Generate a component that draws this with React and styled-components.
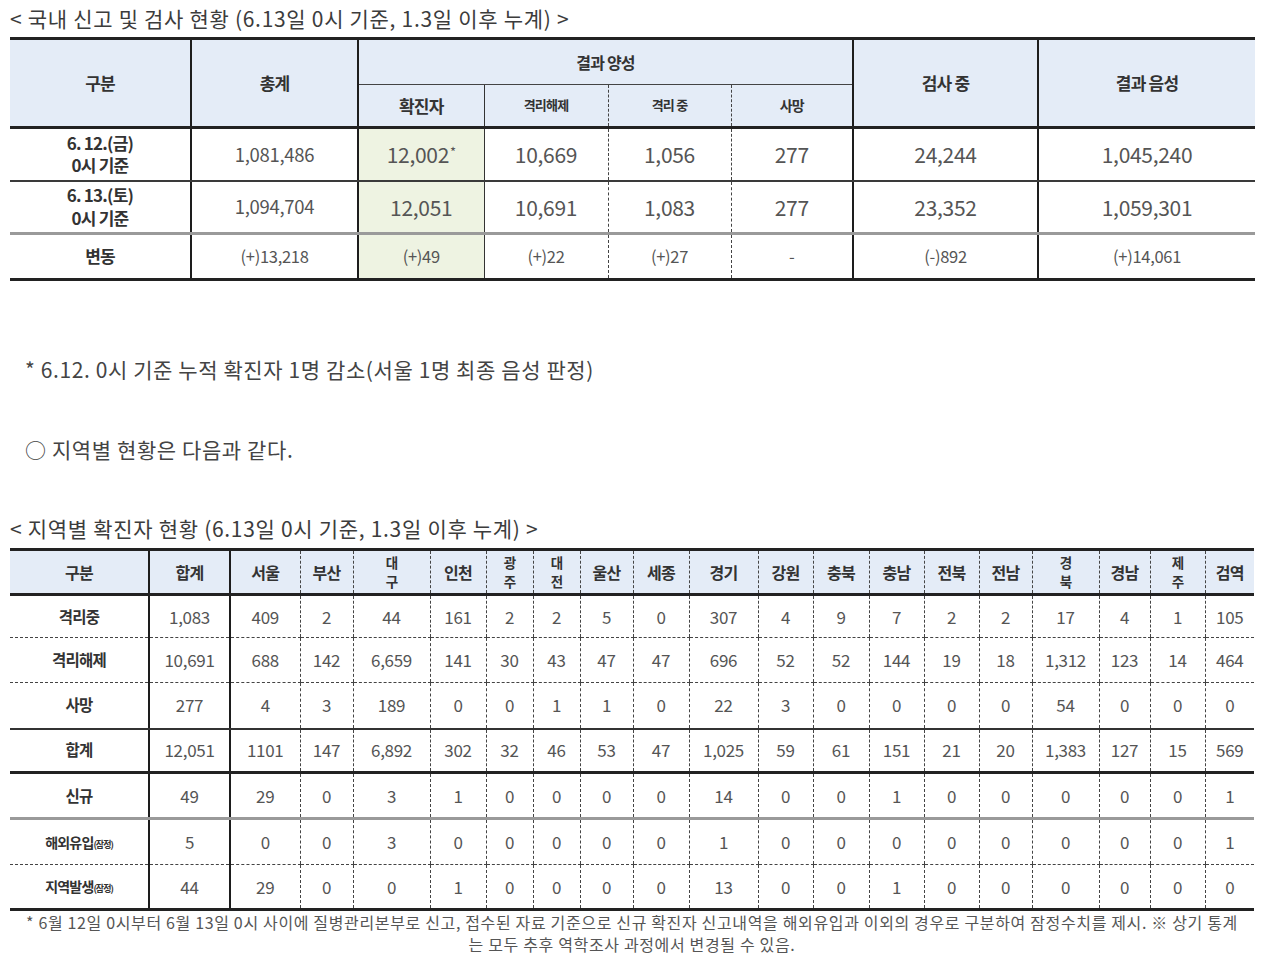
import React from 'react';
import styled, { createGlobalStyle } from 'styled-components';

const GlobalStyle = createGlobalStyle`
  html, body {
    margin: 0;
    padding: 0;
    background: #fff;
  }
  body {
    font-family: "Noto Sans CJK KR", "Noto Sans", sans-serif;
    color: #333;
  }
`;

const Page = styled.div`
  width: 1280px;
  padding-left: 10px;
  box-sizing: border-box;
`;

const Caption = styled.div`
  height: 36px;
  line-height: 36px;
  font-size: 21px;
  color: #3c3c3c;
  letter-spacing: 0.7px;
  margin-top: ${p => p.$top || 0}px;
  margin-bottom: ${p => p.$bottom || 0}px;
`;

const Note = styled.div`
  height: 30px;
  line-height: 30px;
  padding-left: 15px;
  font-size: 21px;
  color: #444;
  letter-spacing: 0.6px;
  margin-top: ${p => p.$top || 0}px;
`;

const Grid = styled.table`
  width: ${p => p.$width}px;
  border-collapse: collapse;
  table-layout: fixed;
  border-top: 3px solid #222;
  border-bottom: 3px solid #222;
`;

const Row = styled.tr`
  height: ${p => p.$h}px;
`;

const Cell = styled.td`
  padding: 0;
  text-align: center;
  vertical-align: middle;
  border-left: ${p => p.$l || 'none'};
  border-bottom: ${p => p.$b || 'none'};
  background: ${p => p.$bg || '#fff'};
  font-size: ${p => p.$size || 17}px;
  font-weight: ${p => (p.$bold ? 700 : 400)};
  color: ${p => (p.$bold ? '#333' : '#555')};
  line-height: ${p => p.$lh || 1.15};
  letter-spacing: ${p => (p.$bold ? '-0.8px' : '-0.3px')};
  white-space: nowrap;
`;

const Stack = styled.div`
  display: flex;
  flex-direction: column;
  align-items: center;
  font-size: 13.5px;
  line-height: 19px;
`;

const Sup = styled.sup`
  font-size: 13px;
  vertical-align: 6px;
  margin-left: 1px;
`;

const Small = styled.span`
  font-size: 9px;
  letter-spacing: -1px;
`;

const Footnote = styled.div`
  width: 1244px;
  text-align: center;
  font-size: 16px;
  line-height: 22px;
  color: #555;
  letter-spacing: 0.65px;
`;

const HEAD_BG = '#e4ecf7';
const GREEN_BG = '#eef3e2';
const THICK = '3px solid #222';
const SOLID2 = '2px solid #1d1d1d';
const THIN = '1px solid #333';
const DASH = '1px dashed #444';
const GRAYBAR = '3px solid #9a9a9a';

/* ---------- table 1 ---------- */

const cols1 = [181, 167, 126, 124, 123, 122, 185, 217];
const lines1 = ['none', SOLID2, SOLID2, THIN, DASH, DASH, SOLID2, SOLID2];

const body1 = [
  {
    label: ['6. 12.(금)', '0시 기준'],
    h: 53,
    b: '2px solid #3a3a3a',
    values: ['1,081,486', '12,002', '10,669', '1,056', '277', '24,244', '1,045,240'],
    star: true,
  },
  {
    label: ['6. 13.(토)', '0시 기준'],
    h: 53,
    b: GRAYBAR,
    values: ['1,094,704', '12,051', '10,691', '1,083', '277', '23,352', '1,059,301'],
  },
  {
    label: ['변동'],
    h: 46,
    b: 'none',
    small: true,
    values: ['(+)13,218', '(+)49', '(+)22', '(+)27', '-', '(-)892', '(+)14,061'],
  },
];

const StatusTable = () => (
  <Grid $width={1245}>
    <colgroup>
      {cols1.map((w, i) => (
        <col key={i} style={{ width: w }} />
      ))}
    </colgroup>
    <tbody>
      <Row $h={46}>
        <Cell rowSpan={2} $bg={HEAD_BG} $bold $b={THICK}>구분</Cell>
        <Cell rowSpan={2} $bg={HEAD_BG} $bold $b={THICK} $l={lines1[1]}>총계</Cell>
        <Cell colSpan={4} $bg={HEAD_BG} $bold $size={16} $b="1px solid #444" $l={lines1[2]}>
          결과 양성
        </Cell>
        <Cell rowSpan={2} $bg={HEAD_BG} $bold $b={THICK} $l={lines1[6]}>검사 중</Cell>
        <Cell rowSpan={2} $bg={HEAD_BG} $bold $b={THICK} $l={lines1[7]}>결과 음성</Cell>
      </Row>
      <Row $h={43}>
        <Cell $bg={HEAD_BG} $bold $b={THICK} $l={lines1[2]}>확진자</Cell>
        <Cell $bg={HEAD_BG} $bold $size={13} $b={THICK} $l={lines1[3]}>격리해제</Cell>
        <Cell $bg={HEAD_BG} $bold $size={13} $b={THICK} $l={lines1[4]}>격리 중</Cell>
        <Cell $bg={HEAD_BG} $bold $size={14} $b={THICK} $l={lines1[5]}>사망</Cell>
      </Row>
      {body1.map((r, ri) => (
        <Row key={ri} $h={r.h}>
          <Cell $bold $lh={1.33} $b={r.b}>
            {r.label.map((t, i) => (
              <div key={i}>{t}</div>
            ))}
          </Cell>
          {r.values.map((v, ci) => (
            <Cell
              key={ci}
              $l={lines1[ci + 1]}
              $b={r.b}
              $bg={ci === 1 ? GREEN_BG : '#fff'}
              $size={r.small ? 16.5 : ci === 0 ? 18.5 : 21}
            >
              {v}
              {r.star && ci === 1 && <Sup>*</Sup>}
            </Cell>
          ))}
        </Row>
      ))}
    </tbody>
  </Grid>
);

/* ---------- table 2 ---------- */

const cols2 = [139, 81, 70, 53, 77, 56, 47, 47, 53, 56, 69, 55, 56, 55, 55, 53, 67, 51, 55, 49];
const heads2 = [
  '구분', '합계', '서울', '부산', '대\n구', '인천', '광\n주', '대\n전', '울산', '세종',
  '경기', '강원', '충북', '충남', '전북', '전남', '경\n북', '경남', '제\n주', '검역',
];

const body2 = [
  { label: '격리중', h: 43, b: DASH, v: '1,083 409 2 44 161 2 2 5 0 307 4 9 7 2 2 17 4 1 105' },
  { label: '격리해제', h: 45, b: DASH, v: '10,691 688 142 6,659 141 30 43 47 47 696 52 52 144 19 18 1,312 123 14 464' },
  { label: '사망', h: 46, b: '2px solid #333', v: '277 4 3 189 0 0 1 1 0 22 3 0 0 0 0 54 0 0 0' },
  { label: '합계', h: 44, b: THICK, v: '12,051 1101 147 6,892 302 32 46 53 47 1,025 59 61 151 21 20 1,383 127 15 569' },
  { label: '신규', h: 46, b: GRAYBAR, v: '49 29 0 3 1 0 0 0 0 14 0 0 1 0 0 0 0 0 1' },
  { label: '해외유입', tag: true, h: 46, b: DASH, v: '5 0 0 3 0 0 0 0 0 1 0 0 0 0 0 0 0 0 1' },
  { label: '지역발생', tag: true, h: 45, b: 'none', v: '44 29 0 0 1 0 0 0 0 13 0 0 1 0 0 0 0 0 0' },
];

const line2 = i => (i === 0 ? 'none' : i <= 2 ? SOLID2 : DASH);

const RegionTable = () => (
  <Grid $width={1244}>
    <colgroup>
      {cols2.map((w, i) => (
        <col key={i} style={{ width: w }} />
      ))}
    </colgroup>
    <tbody>
      <Row $h={45}>
        {heads2.map((h, i) => (
          <Cell key={i} $bg={HEAD_BG} $bold $size={16} $l={line2(i)} $b={THICK}>
            {h.includes('\n') ? (
              <Stack>
                {h.split('\n').map((t, k) => (
                  <span key={k}>{t}</span>
                ))}
              </Stack>
            ) : (
              h
            )}
          </Cell>
        ))}
      </Row>
      {body2.map((r, ri) => (
        <Row key={ri} $h={r.h}>
          <Cell $bold $size={r.tag ? 14 : 15.5} $b={r.b}>
            {r.label}
            {r.tag && <Small>(잠정)</Small>}
          </Cell>
          {r.v.split(' ').map((n, ci) => (
            <Cell key={ci} $l={line2(ci + 1)} $b={r.b} $size={17}>
              {n}
            </Cell>
          ))}
        </Row>
      ))}
    </tbody>
  </Grid>
);

export default function App() {
  return (
    <>
      <GlobalStyle />
      <Page>
        <Caption $bottom={1}>&lt; 국내 신고 및 검사 현황 (6.13일 0시 기준, 1.3일 이후 누계) &gt;</Caption>
        <StatusTable />
        <Note $top={73}>* 6.12. 0시 기준 누적 확진자 1명 감소(서울 1명 최종 음성 판정)</Note>
        <Note $top={50}>○ 지역별 현황은 다음과 같다.</Note>
        <Caption $top={46} $bottom={2}>&lt; 지역별 확진자 현황 (6.13일 0시 기준, 1.3일 이후 누계) &gt;</Caption>
        <RegionTable />
        <Footnote>
          * 6월 12일 0시부터 6월 13일 0시 사이에 질병관리본부로 신고, 접수된 자료 기준으로 신규 확진자 신고내역을
          해외유입과 이외의 경우로 구분하여 잠정수치를 제시. ※ 상기 통계
          <br />
          는 모두 추후 역학조사 과정에서 변경될 수 있음.
        </Footnote>
      </Page>
    </>
  );
}
